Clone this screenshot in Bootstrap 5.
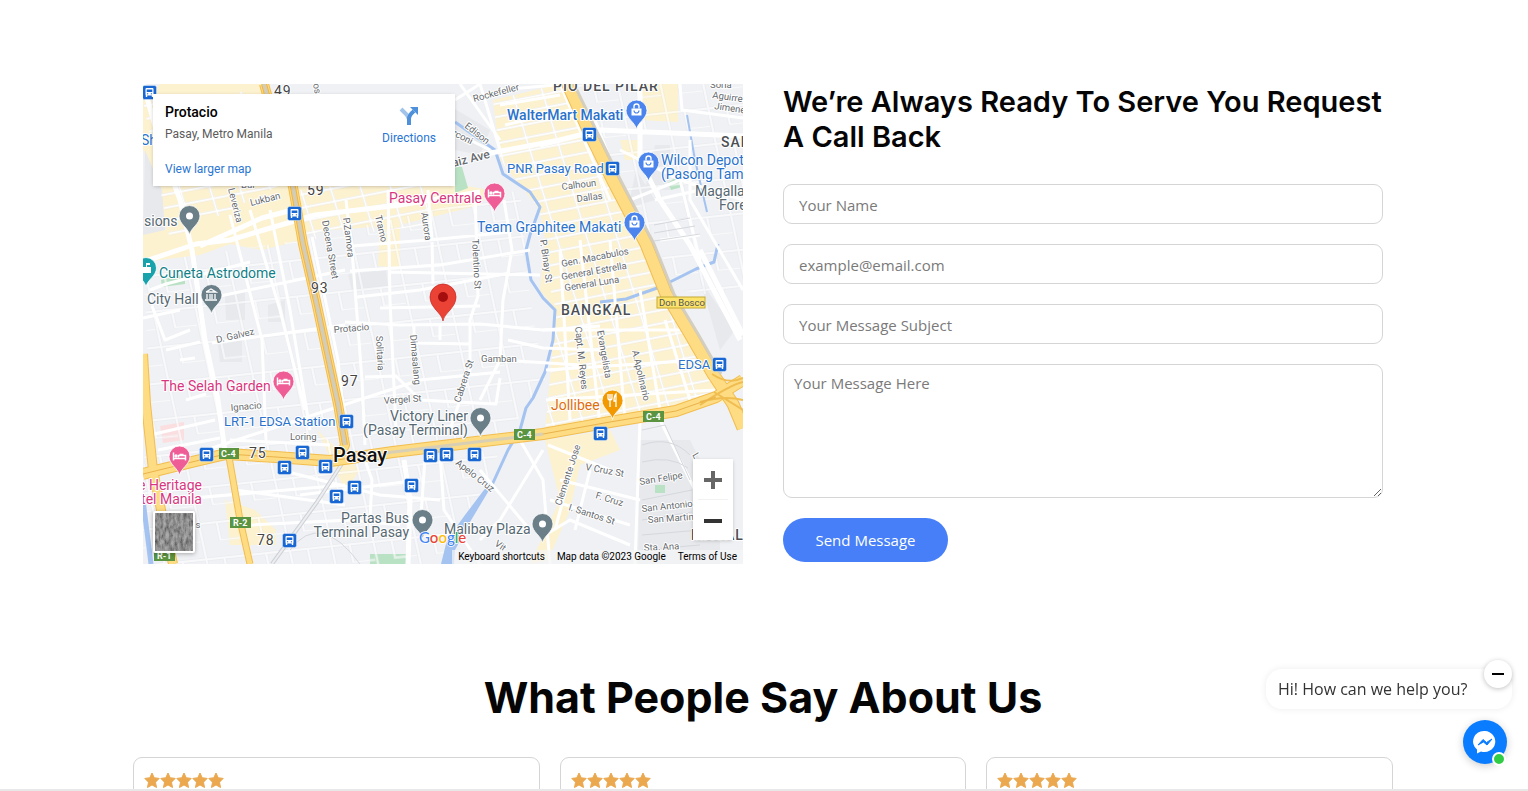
<!DOCTYPE html>
<html lang="en">
<head>
<meta charset="utf-8">
<meta name="viewport" content="width=device-width, initial-scale=1">
<title>Contact</title>
<link href="https://cdn.jsdelivr.net/npm/bootstrap@5.3.0/dist/css/bootstrap.min.css" rel="stylesheet">
<style>
body{font-family:"Open Sans","Noto Sans",sans-serif;font-size:15px;color:#333;background:#fff;padding-right:2px}
.page{height:100vh;overflow:hidden}
.wrap{max-width:1260px;padding:84px 10px 0}
.wrap .row{--bs-gutter-x:40px}
.map{height:480px;overflow:hidden;background:#eff1f4;font-family:Roboto,sans-serif}
.map>svg{width:100%;height:100%}
.place{left:10px;top:10px;width:302px;height:92px;padding:10px 12px;font-size:12px;line-height:16px;box-shadow:0 1px 4px -1px rgba(0,0,0,.3)}
.place h2{font-size:14px;line-height:16px;font-weight:500;color:#000;margin:0 0 6px}
.place p{color:#5b5b5b;margin:0 0 19px}
.place a{color:#2a76d2;text-decoration:none}
.dirs{right:19px;top:12px}
.zoomer{right:10px;bottom:24px;width:40px;box-shadow:0 1px 4px -1px rgba(0,0,0,.3)}
.zoomer button{height:40px;border:0;background:#fff;padding:0}
.zoomer hr{margin:0 5px;border-color:#ccc}
.sat{left:10px;bottom:11px;width:42px;height:42px;border:2px solid #fff;border-radius:2px;padding:0;overflow:hidden;box-shadow:0 1px 4px rgba(0,0,0,.3)}
.credits{right:0;bottom:0;height:14px;font-size:10px;line-height:14px;background:rgba(245,245,245,.7);padding:0 6px;color:#000}
.credits a,.credits button{color:#000;text-decoration:none;border:0;background:none;padding:0}
h3{font:600 29px/35px Inter,sans-serif;color:#050505;margin:0 0 30px}
form{gap:20px}
.field{height:40px;border:1px solid #d5d5d5;border-radius:9px;padding:1px 15px 0;font-size:15px;color:#333}
textarea.field{height:134px;padding:7px 10px}
.field::placeholder{color:#7a7a7a}
.send{width:165px;height:44px;background:#467ff7;color:#fff;border:0;border-radius:22px;font-size:15px}
.title{font:700 43px/48px Inter,sans-serif;color:#050505;margin:109px 0 36px}
.reviews{max-width:1260px;gap:20px}
.review{flex:1;height:120px;border:1px solid #d5d5d5;border-radius:9px;padding:14px 10px}
.hello{right:16px;bottom:82px;width:246px;height:40px;border-radius:16px;background:#fff;padding:8px 12px;font-size:16px;line-height:24px;box-shadow:0 0 7px rgba(0,0,0,.08)}
.shut{right:16px;bottom:103px;width:28px;height:28px;border:0;padding:0;background:#fff;box-shadow:0 1px 5px rgba(0,0,0,.25)}
.chat{right:21px;bottom:27px;width:44px;height:44px;border:0;padding:0;background:#0a7cff;box-shadow:0 2px 8px rgba(0,0,0,.2)}
.online{right:1px;bottom:-2px;width:14px;height:14px;border:2px solid #fff;background:#31cc46}
.edge{height:2px;background:#e8e8e8}
/* map lettering */
.st{font-size:9.5px;fill:#666a6e}
.poi{font-size:14px}
.station{font-size:13px}
.st,.poi,.area,.num,.city{stroke:#fff;stroke-width:2px;stroke-linejoin:round;paint-order:stroke}
.area{font-size:14px;font-weight:500;letter-spacing:1px;fill:#4b4f54}
.num{font-size:14px;letter-spacing:1px;fill:#444}
.city{font-size:20px;font-weight:500;fill:#111}
.bl{fill:#2a72cb}.pk{fill:#d8377f}.gy{fill:#566872}.tl{fill:#117f88}
.sh{font-size:9px;font-weight:700;fill:#fff}
</style>
</head>
<body>
<div class="page">
<main class="container-fluid wrap">
<div class="row">
<div class="col-6">
<div class="map position-relative">
<svg viewBox="143 84 600 480" preserveAspectRatio="xMidYMid slice" role="img" aria-label="Map of Pasay">
<defs>
<pattern id="blocks" width="29" height="13" patternUnits="userSpaceOnUse" patternTransform="rotate(-11) skewX(6)"><path d="M0 1.500H29M1.500 0V13" stroke="#e6e4dd" stroke-width="3" fill="none"/><path d="M0 1.500H29M1.500 0V13" stroke="#fff" stroke-width="2" fill="none"/></pattern>
<pattern id="sparse" width="42" height="36" patternUnits="userSpaceOnUse" patternTransform="rotate(-6) skewX(6)"><path d="M0 2H42M2 0V36M20 2V20H42" stroke="#e2e4e8" stroke-width="3" fill="none"/><path d="M0 2H42M2 0V36M20 2V20H42" stroke="#fff" stroke-width="2" fill="none"/></pattern>
<g id="drop"><path d="M0 19C-1 12-10.500 8-10.500 0A10.500 10.500 0 1 1 10.500 0C10.500 8 1 12 0 19Z" stroke="#fff" stroke-width=".8"/></g>
<g id="bag" fill="#fff"><path d="M-5-2H5V5H-5Z"/><path d="M-2.500-2V-4A2.500 2.500 0 0 1 2.500-4V-2" fill="none" stroke="#fff" stroke-width="1.400"/><path d="M-2.500 0A2.500 2.500 0 0 0 2.500 0" fill="none" stroke="#4a84ec" stroke-width="1.200"/></g>
<g id="bed" fill="none" stroke="#fff" stroke-width="1.500"><path d="M-6-4V4M-6 2H6V4M6 2V-1H-1V1"/><circle cx="-3.500" cy="-.5" r="1"/><path d="M0-2H4"/></g>
<g id="bus"><rect x="-6.500" y="-6.500" width="14" height="14" rx="2" fill="#1967d2" stroke="#fff" stroke-width=".4"/><rect x="-3.500" y="-4" width="8" height="7.500" rx="1" fill="#fff"/><path d="M-2.300-2.500H3.300V0H-2.300Z" fill="#1967d2"/><path d="M-2.500 3V5M3.500 3V5" stroke="#fff" stroke-width="1.400"/><path d="M-2 1.800H-.8M1.800 1.800H3" stroke="#1967d2"/></g>
<filter id="grain"><feTurbulence type="fractalNoise" baseFrequency=".35 .15" numOctaves="5" seed="4"/><feColorMatrix values=".7 0 0 0 .04 .7 0 0 0 .04 .7 0 0 0 .04 0 0 0 0 1" color-interpolation-filters="sRGB"/></filter>
</defs>
<path fill="#eff1f4" d="M143 84H743V564H143Z"/>
<!-- commercial tint, parks and blocks -->
<g fill="#fdf2cf">
<path d="M143 100L160 84H262L302 240 262 250 230 244 200 255 143 262V230L166 230 160 190 143 150Z"/>
<path d="M293 187L430 180 490 190 480 205 400 225 305 232ZM380 225L400 222V268L378 266Z"/>
<path d="M493 100L560 84 646 244 735 400 640 420 545 432 556 310 540 290 545 240 540 210 500 160Z"/>
<path d="M640 84H678V122L640 120ZM620 140H640V160H625ZM545 440L610 430 620 450 580 465 570 510 548 560 530 564 560 500ZM317 430L360 470 345 490ZM225 500L255 510 276 530V545H230Z"/>
</g>
<g fill="#e7e9ed"><path d="M145 150L162 190 165 230 143 235ZM348 274L386 270 388 286 352 292ZM225 295L245 292V320H226ZM268 305L285 300V322H268ZM218 345L242 340V362H220ZM655 145H670V190H645ZM636 170L655 200 628 208ZM640 440H690L720 500V564H638ZM440 100L490 130 480 155 455 150ZM700 280L735 330 720 350Z"/></g>
<g fill="#b9e2c4"><path d="M455 165L462 167 468 188 455 193ZM668 183L676 177 684 182 682 187 671 190ZM161 280L185 274V284L162 287ZM655 485H665V493H655ZM370 554H408V564H370Z"/></g>
<path fill="#fbdfe0" d="M160 426L184 422V440L163 443Z"/>
<path fill="url(#sparse)" d="M200 255L302 240 346 460 143 475 150 400 143 262ZM302 240L520 190 530 300 545 380 500 445 346 460ZM143 475L340 460 500 450 450 564H143ZM570 84H743V300L680 290Z" opacity=".6"/>
<path fill="url(#blocks)" d="M493 100L560 84 735 400 545 432 556 310 540 250 540 210 500 160ZM143 100L262 90 290 180 170 240ZM300 190L430 175V225L305 240Z"/>
<!-- water -->
<g fill="none" stroke="#a4c3f1" stroke-width="3" stroke-linejoin="round">
<path d="M455 122L495 150 503 174 530 192 540 207 530 235 526 250 531 280 543 298 555 310 553 340 545 372 533 398 526 408 520 430 508 450 492 485"/>
<path d="M718 244L714 262 696 269 660 287 626 299 600 302"/><path d="M687 115L695 160 707 212" stroke-width="2"/><path d="M143 500L151 564" stroke-width="5"/>
</g>
<path fill="#a4c3f1" d="M494 482L470 522 455 550 454 564H441L447 540 465 515 490 482Z"/>
<!-- local streets -->
<g fill="none" stroke-linejoin="round">
<g stroke="#fff" stroke-width="5"><path d="M143 262L196 244 230 240 315 215 400 205 480 192M143 84L162 150 180 200 192 250 205 340 218 400 225 452M300 208L262 218 200 246M540 145L600 130 743 136M480 155L560 140M590 110L613 170 645 244 700 350M640 136L640 160 660 200 690 245 740 340M640 84V136M404 460L410 500 408 564M700 250L743 335"/></g>
<g stroke="#fff" stroke-width="3">
<path d="M345 322L400 325 480 324 543 330 600 326M346 200L352 250 362 380 365 445M388 190L390 300 396 430M428 190L432 240 433 284M475 190L478 296 470 320 470 370 450 430M504 200L512 250 503 300 500 360 480 400M352 246L440 239 510 232M350 271L440 265 530 250M357 297L420 290 510 273M380 308L480 306M390 272L540 275M312 237L338 360 344 420M230 215L262 340 266 440M250 210L280 310 305 410M270 210L290 310 310 430M196 301L345 270M212 343L345 325M150 290L166 284 250 262M206 450L420 380 500 372M414 326V343L470 344M365 377L396 376 420 400 496 404 500 378M440 324V340M508 340L543 348 600 350M500 360L580 365"/>
<path d="M280 470L380 495 440 500M300 495L420 480M235 490L345 505M250 525L350 520 400 525M170 500L345 485M365 460L372 480 370 520M425 458L420 530M440 455L444 510 480 564M480 470L530 530M543 450L500 520 480 540M520 440L543 480 550 564M548 445L610 470M640 420L635 564M660 420L700 500"/>
<path d="M560 84L610 200M620 150L680 180 700 260M630 200L680 180 743 200M680 84L682 110 743 118M690 140V200L743 290M655 200L700 190M660 240L700 235M560 250L570 420M580 240L600 425M610 240L625 420M640 290L660 410M665 320L690 400M543 330H680M546 370L700 360M546 400L715 390"/>
<path d="M455 100L480 84M460 84L500 140M480 84L500 150M500 90L555 85M500 105L560 95M505 125L570 110M450 130L490 150"/>
<path d="M152 306L165 340 190 330M143 318L180 310M166 350L200 342M180 360L195 358M186 400L206 394M158 450L220 438M150 435L215 420M230 440L330 445M560 480L640 500M550 500L630 525M575 455L555 530M590 470L575 530M545 535L570 520 630 545"/>
</g>
<g stroke="#d5d8dd" stroke-width="1">
<path d="M642 430L665 425 690 480M642 445Q670 435 690 455M642 462Q670 455 688 468M642 500L692 490M642 520L692 512M642 535L700 530M642 550L700 545M360 564Q320 510 290 550M654 225L690 218M654 233L695 226M654 241L700 234"/>
</g>
<path d="M347 456L317 502 272 564" stroke="#cdd0d5" stroke-width="4"/><path d="M347 456L317 502 272 564" stroke="#eceef1" stroke-width="2"/>
</g>
<!-- highways -->
<g fill="none" stroke-linejoin="round">
<g stroke="#f2bd4f"><path d="M264 84L293 187 303 244 316 301 338 404 345 445 338 460" stroke-width="10"/><path d="M565 78L590 134 613 181 646 244 666 294 690 334 713 374 733 404 743 428" stroke-width="13"/><path d="M143 474L196 461 226 454 276 457 330 461 393 452 476 442 543 434 610 422 676 411 716 397 743 380" stroke-width="12"/><path d="M143 354L146 404 153 470 163 520 173 564" stroke-width="10"/><path d="M229 457L240 520 250 564" stroke-width="7"/></g>
<g stroke="#fddc84"><path d="M264 84L293 187 303 244 316 301 338 404 345 445 338 460" stroke-width="8"/><path d="M565 78L590 134 613 181 646 244 666 294 690 334 713 374 733 404 743 428" stroke-width="11"/><path d="M143 474L196 461 226 454 276 457 330 461 393 452 476 442 543 434 610 422 676 411 716 397 743 380" stroke-width="10"/><path d="M143 354L146 404 153 470 163 520 173 564" stroke-width="8"/><path d="M229 457L240 520 250 564" stroke-width="5"/></g>
<path d="M700 402Q725 395 743 400M712 374Q728 385 743 378M714 392L743 410M700 405Q730 385 743 382" stroke="#f0bd50" stroke-width="2"/>
<path d="M264 84L293 187 303 244 316 301 338 404 345 445" stroke="#f6b53a" stroke-width="6"/>
<path d="M264 84L293 187 303 244 316 301 338 404 345 445" stroke="#d3ccb6" stroke-width="4"/>
<path d="M572 80L598 134 621 181 654 244 674 294 698 334 721 374" stroke="#d3ceC0" stroke-width="3"/>
<path d="M143 474L196 461 226 454 276 457 330 461 393 452 476 442 543 434 610 422 676 411 716 397" stroke="#eab24a" stroke-width="1"/>
<path d="M385 453L476 442 543 434" stroke="#d8cfb4" stroke-width="3"/>
</g>
<!-- street names -->
<g class="st">
<text x="474" y="102" transform="rotate(-15 474 102)">Rockefeller</text><text x="464" y="127" transform="rotate(38 464 127)">Edison</text><text x="452" y="135" transform="rotate(27 452 135)">rconi</text>
<text x="562" y="190" transform="rotate(-7 562 190)">Calhoun</text><text x="577" y="202" transform="rotate(-7 577 202)">Dallas</text>
<text x="710" y="88">Soria</text><text x="712" y="98" transform="rotate(8 712 98)">Aguirre</text><text x="714" y="109" transform="rotate(8 714 109)">Jimenez</text>
<text x="313" y="84" transform="rotate(80 313 84)">os</text><text x="241" y="188">Bul</text><text x="251" y="206" transform="rotate(-14 251 206)">Lukban</text><text x="228" y="189" transform="rotate(76 228 189)">Leveriza</text>
<text x="322" y="221" transform="rotate(80 322 221)">Decena Street</text><text x="343" y="218" transform="rotate(83 343 218)">P.Zamora</text><text x="375" y="216" transform="rotate(77 375 216)">Tramo</text><text x="421" y="213" transform="rotate(81 421 213)">Aurora</text><text x="472" y="239" transform="rotate(87 472 239)">Tolentino St</text><text x="540" y="240" transform="rotate(82 540 240)">P. Binay St</text>
<text x="562" y="267" transform="rotate(-11 562 267)">Gen. Macabulos</text><text x="562" y="280" transform="rotate(-10 562 280)">General Estrella</text><text x="565" y="291" transform="rotate(-9 565 291)">General Luna</text>
<text x="217" y="343" transform="rotate(-13 217 343)">D. Galvez</text><text x="334" y="333" transform="rotate(-5 334 333)">Protacio</text><text x="376" y="336" transform="rotate(87 376 336)">Solitaria</text><text x="410" y="335" transform="rotate(85 410 335)">Dimasalang</text><text x="460" y="403" transform="rotate(-72 460 403)">Cabrera St</text><text x="481" y="362">Gamban</text><text x="384" y="404" transform="rotate(-4 384 404)">Vergel St</text><text x="231" y="411" transform="rotate(-5 231 411)">Ignacio</text><text x="290" y="440">Loring</text>
<text x="575" y="327" transform="rotate(84 575 327)">Capt. M. Reyes</text><text x="597" y="331" transform="rotate(80 597 331)">Evangelista</text><text x="632" y="351" transform="rotate(77 632 351)">A.Apolinario</text>
<text x="455" y="464" transform="rotate(38 455 464)">Apelo Cruz</text><text x="561" y="506" transform="rotate(-72 561 506)">Clemente Jose</text><text x="585" y="470" transform="rotate(10 585 470)">V Cruz St</text><text x="595" y="498" transform="rotate(17 595 498)">F. Cruz</text><text x="568" y="510" transform="rotate(18 568 510)">I. Santos St</text><text x="640" y="485" transform="rotate(-9 640 485)">San Felipe</text><text x="642" y="512" transform="rotate(-6 642 512)">San Antonio</text><text x="648" y="523" transform="rotate(-4 648 523)">San Martin</text><text x="644" y="551" transform="rotate(-3 644 551)">Sta. Ana</text><text x="185" y="528">nas</text><text x="692" y="455" transform="rotate(60 692 455)">L</text><text x="494" y="545" transform="rotate(35 494 545)">Vit</text>
<text x="453" y="167" transform="rotate(-14 453 167)" style="font-size:12px;font-weight:500">aiz Ave</text>
</g>
<g class="area"><text x="553" y="91">PIO DEL PILAR</text><text x="561" y="315">BANGKAL</text><text x="721" y="147">SAN</text><text x="691" y="540">MAGAL</text></g>
<g class="num"><text x="274" y="96">49</text><text x="307" y="195">59</text><text x="311" y="293">93</text><text x="341" y="386">97</text><text x="249" y="458">75</text><text x="257" y="545">78</text></g>
<text class="city" x="333" y="462">Pasay</text>
<!-- road shields -->
<g fill="#5b9440"><rect x="219" y="448" width="20" height="11"/><rect x="514" y="429" width="21" height="11"/><rect x="643" y="411" width="21" height="11"/><rect x="230" y="517" width="21" height="11"/><rect x="154" y="550" width="21" height="11"/></g>
<g class="sh"><text x="221" y="457">C-4</text><text x="517" y="438">C-4</text><text x="646" y="420">C-4</text><text x="233" y="526">R-2</text><text x="157" y="559">R-1</text></g>
<rect x="657" y="297" width="48" height="11" fill="#fbe36c" stroke="#c6a932"/><text x="659" y="306" font-size="9.500" fill="#555">Don Bosco</text>
<!-- place names -->
<g class="poi bl"><text x="507" y="120" font-weight="500">WalterMart Makati</text><text class="station" x="507" y="173">PNR Pasay Road</text><text x="477" y="232">Team Graphitee Makati</text><text x="661" y="165">Wilcon Depot</text><text x="661" y="179">(Pasong Tamo)</text><text class="station" x="678" y="369">EDSA</text><text class="station" x="224" y="426">LRT-1 EDSA Station</text><text x="141" y="145">Sho</text></g>
<g class="poi pk"><text x="389" y="203">Pasay Centrale</text><text x="161" y="391">The Selah Garden</text><text x="202" y="490" text-anchor="end">The Heritage</text><text x="202" y="504" text-anchor="end">Hotel Manila</text></g>
<g class="poi gy"><text x="144" y="226">sions</text><text x="147" y="304">City Hall</text><text x="468" y="421" text-anchor="end">Victory Liner</text><text x="468" y="435" text-anchor="end">(Pasay Terminal)</text><text x="409" y="523" text-anchor="end">Partas Bus</text><text x="409" y="537" text-anchor="end">Terminal Pasay</text><text x="444" y="534">Malibay Plaza</text><text x="695" y="196">Magallanes</text><text x="719" y="210">Forest</text></g>
<text class="poi tl" x="159" y="278">Cuneta Astrodome</text><text class="poi" x="551" y="410" fill="#df6d0c">Jollibee</text>
<!-- place markers -->
<g fill="#6b7f89"><use href="#drop" x="189.500" y="216"/><use href="#drop" x="211.500" y="295"/><use href="#drop" x="480.500" y="418"/><use href="#drop" x="422.500" y="520"/><use href="#drop" x="542.500" y="524"/></g>
<g fill="#fff"><circle cx="189.500" cy="216" r="3.500"/><circle cx="480.500" cy="418" r="3.500"/><circle cx="422.500" cy="520" r="3.500"/><circle cx="542.500" cy="524" r="3.500"/></g>
<path d="M206 292L211 289 216 292H206M207 294V299M210 294V299M212 294V299M215 294V299M205 300H217" fill="none" stroke="#fff" stroke-width="1.300"/>
<g fill="#ee5d96"><use href="#drop" x="494.500" y="193.500"/><use href="#drop" x="283.500" y="381.500"/><use href="#drop" x="179.500" y="456.500"/></g>
<use href="#bed" x="494.500" y="193.500"/><use href="#bed" x="283.500" y="381.500"/><use href="#bed" x="179.500" y="456.500"/>
<g fill="#4a84ec"><use href="#drop" x="636.500" y="110.500"/><use href="#drop" x="648.500" y="162.500"/><use href="#drop" x="634.500" y="222.500"/></g>
<use href="#bag" x="636.500" y="110.500"/><use href="#bag" x="648.500" y="162.500"/><use href="#bag" x="634.500" y="222.500"/>
<use href="#drop" x="146" y="268" fill="#18a2ac"/><path d="M142 267H151V273H142ZM146 263H150V265H147V268H146Z" fill="#fff"/>
<use href="#drop" x="612.500" y="400.500" fill="#f29900"/><path d="M608 394V398Q608 400 610 400Q612 400 612 398V394M610 394V407M616 407V394Q614 396 614 401H616" fill="none" stroke="#fff" stroke-width="1.300"/>
<use href="#bus" x="149" y="92"/><use href="#bus" x="589" y="134"/><use href="#bus" x="612" y="168"/><use href="#bus" x="294" y="213"/><use href="#bus" x="719" y="364"/><use href="#bus" x="346" y="421"/><use href="#bus" x="206" y="454"/><use href="#bus" x="302" y="452"/><use href="#bus" x="284" y="467"/><use href="#bus" x="325" y="466"/><use href="#bus" x="336" y="496"/><use href="#bus" x="354" y="487"/><use href="#bus" x="411" y="485"/><use href="#bus" x="430" y="455"/><use href="#bus" x="446" y="454"/><use href="#bus" x="474" y="454"/><use href="#bus" x="600" y="433"/><use href="#bus" x="289" y="540"/>
<path d="M443 321C442 313 430 308 430 297A13 13 0 0 1 456 297C456 308 444 313 443 321Z" fill="#ea4335" stroke="#c5221f" stroke-width=".7"/><circle cx="443" cy="297" r="5" fill="#a50e0e"/>
<text x="419" y="543" font-family="Lato,sans-serif" font-size="15" font-weight="500" stroke="#fff" stroke-width="1.500" paint-order="stroke"><tspan fill="#4285f4">G</tspan><tspan fill="#ea4335">o</tspan><tspan fill="#fbbc04">o</tspan><tspan fill="#4285f4">g</tspan><tspan fill="#34a853">l</tspan><tspan fill="#ea4335">e</tspan></text>
</svg>
<div class="place position-absolute bg-white">
<h2>Protacio</h2><p>Pasay, Metro Manila</p><a href="#">View larger map</a>
<a href="#" class="dirs position-absolute d-flex flex-column align-items-center gap-1"><svg width="20" height="20" viewBox="0 0 20 20" fill="none"><path d="M2 3L8 9 10 13V19" stroke="#a3c4ea" stroke-width="4"/><path d="M10 19V13Q10 9 15 5" stroke="#4f90da" stroke-width="4"/><path d="M11 1H19V9Z" fill="#4f90da"/></svg>Directions</a>
</div>
<button class="sat position-absolute" aria-label="Satellite view"><svg class="d-block" width="38" height="38"><rect width="38" height="38" filter="url(#grain)"/></svg></button>
<div class="zoomer position-absolute d-flex flex-column bg-white">
<button aria-label="Zoom in"><svg width="18" height="18" viewBox="0 0 18 18"><path d="M0 9H18M9 0V18" stroke="#666" stroke-width="4"/></svg></button><hr><button aria-label="Zoom out"><svg width="18" height="18" viewBox="0 0 18 18"><path d="M0 9H18" stroke="#333" stroke-width="4"/></svg></button>
</div>
<div class="credits position-absolute d-flex"><button class="me-2">Keyboard shortcuts</button><span class="mx-1">Map data ©2023 Google</span><a href="#" class="ms-2">Terms of Use</a></div>
</div>
</div>
<div class="col-6">
<h3>We’re Always Ready To Serve You Request A Call Back</h3>
<form class="d-flex flex-column">
<input class="field w-100" type="text" placeholder="Your Name" aria-label="Your Name">
<input class="field w-100" type="email" placeholder="example@email.com" aria-label="Email">
<input class="field w-100" type="text" placeholder="Your Message Subject" aria-label="Subject">
<textarea class="field w-100" placeholder="Your Message Here" aria-label="Message"></textarea>
<button class="send" type="button">Send Message</button>
</form>
</div>
</div>
</main>
<h2 class="title text-center">What People Say About Us</h2>
<svg class="d-none"><defs><g id="stars" fill="#eba84e" stroke="#eba84e" stroke-linejoin="round"><path id="s" d="M8 1L10.200 5.800 15.200 6.400 11.500 10.200 12.500 15.500 8 12.900 3.500 15.500 4.500 10.200 .8 6.400 5.800 5.800Z"/><use href="#s" x="16"/><use href="#s" x="32"/><use href="#s" x="48"/><use href="#s" x="64"/></g></defs></svg>
<section class="reviews d-flex mx-auto">
<article class="review"><svg class="d-block" width="80" height="17" role="img" aria-label="5 stars"><use href="#stars"/></svg></article>
<article class="review"><svg class="d-block" width="80" height="17" role="img" aria-label="5 stars"><use href="#stars"/></svg></article>
<article class="review"><svg class="d-block" width="80" height="17" role="img" aria-label="5 stars"><use href="#stars"/></svg></article>
</section>
</div>
<div class="hello position-fixed">Hi! How can we help you?</div>
<button class="shut position-fixed rounded-circle d-flex align-items-center justify-content-center" aria-label="Hide greeting"><svg width="12" height="2"><path d="M0 1H12" stroke="#000" stroke-width="2"/></svg></button>
<button class="chat position-fixed rounded-circle d-flex align-items-center justify-content-center" aria-label="Open chat"><svg width="24" height="24" viewBox="0 0 24 24"><path d="M12 1A11 10.500 0 0 0 4 19.500V23.500L8 21.500A11 10.500 0 1 0 12 1Z" fill="#fff"/><path d="M5 15L10 9.500 13.500 12.500 19 9 14 15 10.500 12Z" fill="#0a7cff" stroke="#0a7cff" stroke-linejoin="round"/></svg><span class="online position-absolute rounded-circle"></span></button>
<div class="edge position-fixed bottom-0 start-0 end-0"></div>
<script src="https://cdn.jsdelivr.net/npm/bootstrap@5.3.0/dist/js/bootstrap.bundle.min.js"></script>
</body>
</html>
